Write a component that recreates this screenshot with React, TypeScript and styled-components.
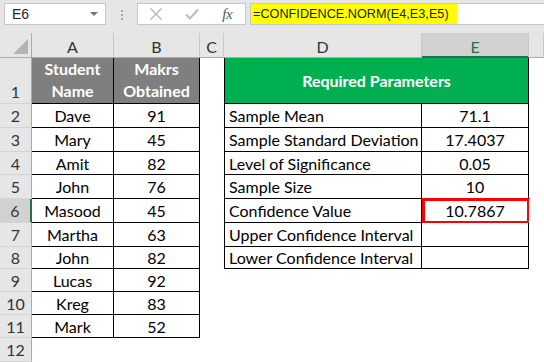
import React from "react";
import styled, { createGlobalStyle, css } from "styled-components";

const GlobalStyle = createGlobalStyle`
    html, body {
        margin: 0;
        padding: 0;
        background: #fff;
    }
    body {
        font-family: "Lato", "Liberation Sans", sans-serif;
    }
`;

const students = [
    ["Dave", "91"],
    ["Mary", "45"],
    ["Amit", "82"],
    ["John", "76"],
    ["Masood", "45"],
    ["Martha", "63"],
    ["John", "82"],
    ["Lucas", "92"],
    ["Kreg", "83"],
    ["Mark", "52"],
];

const params = [
    ["Sample Mean", "71.1"],
    ["Sample Standard Deviation", "17.4037"],
    ["Level of Significance", "0.05"],
    ["Sample Size", "10"],
    ["Confidence Value", "10.7867"],
    ["Upper Confidence Interval", ""],
    ["Lower Confidence Interval", ""],
];

const columns = ["A", "B", "C", "D", "E"];

const CrossIcon = () => (
    <svg width="14" height="14" viewBox="0 0 14 14">
        <path d="M1.5 1.5 L12.5 12.5 M12.5 1.5 L1.5 12.5" stroke="#b4b4b4" strokeWidth="1.3" fill="none" />
    </svg>
);

const CheckIcon = () => (
    <svg width="16" height="14" viewBox="0 0 16 14">
        <path d="M2 7.5 L6 11.5 L14 2.5" stroke="#bdbdbd" strokeWidth="2.2" fill="none" />
    </svg>
);

export default function App() {
    return (
        <>
            <GlobalStyle />
            <Sheet>
                <FormulaBar>
                    <NameBox>
                        E6
                        <Caret />
                    </NameBox>
                    <Grip>
                        <Dot />
                        <Dot />
                        <Dot />
                    </Grip>
                    <ButtonBox>
                        <ButtonSlot>
                            <CrossIcon />
                        </ButtonSlot>
                        <ButtonSlot>
                            <CheckIcon />
                        </ButtonSlot>
                        <ButtonSlot>
                            <Fx>fx</Fx>
                        </ButtonSlot>
                    </ButtonBox>
                    <FormulaInput>
                        <Highlight>=CONFIDENCE.NORM(E4,E3,E5)</Highlight>
                    </FormulaInput>
                </FormulaBar>

                <Grid>
                    <Corner />
                    {columns.map((c) => (
                        <ColHead key={c} $active={c === "E"}>
                            {c}
                        </ColHead>
                    ))}
                    <ColHead />

                    <RowHead $bottom>1</RowHead>
                    <Cell $fill="gray" $border $bold $stack>
                        <span>Student</span>
                        <span>Name</span>
                    </Cell>
                    <Cell $fill="gray" $border $bold $stack>
                        <span>Makrs</span>
                        <span>Obtained</span>
                    </Cell>
                    <Cell />
                    <Cell $fill="green" $border $left $bold $span={2}>
                        Required Parameters
                    </Cell>
                    <Cell />

                    {students.map(([name, mark], i) => {
                        const param = params[i];
                        const row = i + 2;
                        return (
                            <React.Fragment key={row}>
                                <RowHead $active={row === 6}>{row}</RowHead>
                                <Cell $border>{name}</Cell>
                                <Cell $border>{mark}</Cell>
                                <Cell />
                                {param ? (
                                    <>
                                        <Cell $border $left $align="left">
                                            {param[0]}
                                        </Cell>
                                        <Cell $border>
                                            {param[1]}
                                            {row === 6 && (
                                                <Selection>
                                                    <FillHandle />
                                                </Selection>
                                            )}
                                        </Cell>
                                    </>
                                ) : (
                                    <>
                                        <Cell />
                                        <Cell />
                                    </>
                                )}
                                <Cell />
                            </React.Fragment>
                        );
                    })}

                    <RowHead>12</RowHead>
                </Grid>
            </Sheet>
        </>
    );
}

const Sheet = styled.div`
    width: 544px;
    height: 362px;
    overflow: hidden;
    display: flex;
    flex-direction: column;
    background: #fff;
`;

const FormulaBar = styled.div`
    height: 33px;
    flex: none;
    box-sizing: border-box;
    padding: 3px 0 0 4px;
    display: flex;
    align-items: flex-start;
    background: #e6e6e6;
`;

const NameBox = styled.div`
    width: 102px;
    height: 22px;
    box-sizing: border-box;
    padding: 0 7px 0 7px;
    display: flex;
    align-items: center;
    justify-content: space-between;
    background: #fff;
    border: 1px solid #c6c6c6;
    font-family: "Liberation Sans", sans-serif;
    font-size: 14px;
    color: #222;
`;

const Caret = styled.span`
    width: 0;
    height: 0;
    border-left: 4px solid transparent;
    border-right: 4px solid transparent;
    border-top: 4px solid #767676;
`;

const Grip = styled.div`
    width: 31px;
    padding-top: 7px;
    display: flex;
    flex-direction: column;
    align-items: center;
    gap: 2px;
`;

const Dot = styled.span`
    width: 2px;
    height: 2px;
    background: #a6a6a6;
`;

const ButtonBox = styled.div`
    width: 109px;
    height: 22px;
    box-sizing: border-box;
    display: flex;
    background: #fff;
    border: 1px solid #c6c6c6;
`;

const ButtonSlot = styled.div`
    width: 36px;
    display: flex;
    align-items: center;
    justify-content: center;
`;

const Fx = styled.span`
    font-family: "Liberation Serif", serif;
    font-style: italic;
    font-size: 15px;
    color: #555;
    letter-spacing: -0.5px;
`;

const FormulaInput = styled.div`
    flex: 1;
    height: 22px;
    margin-left: 4px;
    box-sizing: border-box;
    display: flex;
    background: #fff;
    border: 1px solid #c6c6c6;
    border-right: none;
`;

const Highlight = styled.span`
    display: flex;
    align-items: center;
    padding: 0 8px 0 2px;
    background: #ffff00;
    font-family: "Liberation Sans", sans-serif;
    font-size: 12.7px;
    color: #222;
`;

const Grid = styled.div`
    flex: 1;
    display: grid;
    grid-template-columns: 32px 82px 86px 24px 198px 107px 1fr;
    grid-template-rows: 25px 46px 24px 24px 23px 24px 24px 24px 22px 23px 23px 23px 1fr;
`;

const headBase = css`
    box-sizing: border-box;
    display: flex;
    align-items: center;
    justify-content: center;
    background: #e6e6e6;
    font-family: "Lato", "Liberation Sans", sans-serif;
    font-size: 16px;
    color: #333;
`;

const Corner = styled.div`
    ${headBase};
    position: relative;
    border-right: 1px solid #ababab;
    border-bottom: 1px solid #ababab;

    &::after {
        content: "";
        position: absolute;
        right: 3px;
        bottom: 3px;
        width: 0;
        height: 0;
        border-left: 15px solid transparent;
        border-bottom: 15px solid #b4b4b4;
    }
`;

const ColHead = styled.div<{ $active?: boolean }>`
    ${headBase};
    border-right: 1px solid #c8c8c8;
    border-bottom: ${(p) => (p.$active ? "2px solid #217346" : "1px solid #ababab")};
    background: ${(p) => (p.$active ? "#d2d2d2" : "#e6e6e6")};
    color: ${(p) => (p.$active ? "#217346" : "#333")};
    padding-top: 3px;
`;

const RowHead = styled.div<{ $active?: boolean; $bottom?: boolean }>`
    ${headBase};
    grid-column: 1;
    align-items: ${(p) => (p.$bottom ? "flex-end" : "center")};
    padding-bottom: ${(p) => (p.$bottom ? "2px" : "0")};
    border-bottom: 1px solid #d4d4d4;
    border-right: ${(p) => (p.$active ? "2px solid #217346" : "1px solid #ababab")};
    background: ${(p) => (p.$active ? "#d2d2d2" : "#e6e6e6")};
    color: ${(p) => (p.$active ? "#3a3a3a" : "#333")};
`;

const fills = {
    gray: "#7f7f7f",
    green: "#00b050",
    none: "#fff",
};

const Cell = styled.div<{
    $fill?: keyof typeof fills;
    $border?: boolean;
    $left?: boolean;
    $bold?: boolean;
    $stack?: boolean;
    $align?: "left" | "center";
    $span?: number;
}>`
    position: relative;
    box-sizing: border-box;
    min-width: 0;
    display: flex;
    flex-direction: ${(p) => (p.$stack ? "column" : "row")};
    align-items: center;
    justify-content: ${(p) => (p.$stack ? "flex-end" : p.$align === "left" ? "flex-start" : "center")};
    padding: ${(p) => (p.$stack ? "0 0 1px" : p.$align === "left" ? "0 0 0 4px" : "0")};
    grid-column: ${(p) => (p.$span ? `span ${p.$span}` : "auto")};
    background: ${(p) => fills[p.$fill ?? "none"]};
    border-right: ${(p) => (p.$border ? "1px solid #000" : "none")};
    border-bottom: ${(p) => (p.$border ? "1px solid #000" : "none")};
    border-left: ${(p) => (p.$left ? "1px solid #000" : "none")};
    font-size: 16px;
    font-weight: ${(p) => (p.$bold ? 700 : 400)};
    line-height: ${(p) => (p.$stack ? "22px" : "normal")};
    color: ${(p) => (p.$fill && p.$fill !== "none" ? "#fff" : "#000")};
    white-space: nowrap;
`;

const Selection = styled.div`
    position: absolute;
    top: -1px;
    left: 0;
    right: -2px;
    bottom: -2px;
    border: 3px solid #ff0000;
    pointer-events: none;
`;

const FillHandle = styled.span`
    position: absolute;
    right: -3px;
    bottom: -3px;
    width: 3px;
    height: 3px;
    background: #217346;
`;
